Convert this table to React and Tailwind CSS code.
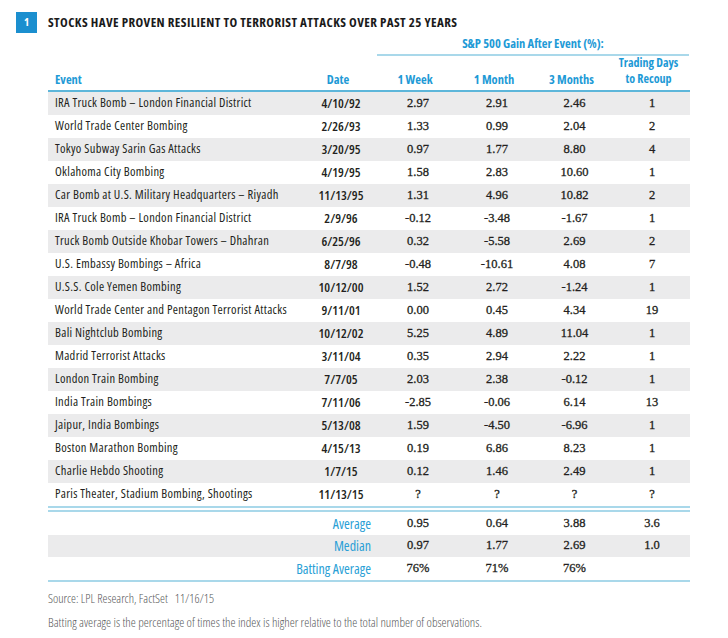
import React from "react";

const rows = [
  ["IRA Truck Bomb – London Financial District", "4/10/92", "2.97", "2.91", "2.46", "1"],
  ["World Trade Center Bombing", "2/26/93", "1.33", "0.99", "2.04", "2"],
  ["Tokyo Subway Sarin Gas Attacks", "3/20/95", "0.97", "1.77", "8.80", "4"],
  ["Oklahoma City Bombing", "4/19/95", "1.58", "2.83", "10.60", "1"],
  ["Car Bomb at U.S. Military Headquarters – Riyadh", "11/13/95", "1.31", "4.96", "10.82", "2"],
  ["IRA Truck Bomb – London Financial District", "2/9/96", "-0.12", "-3.48", "-1.67", "1"],
  ["Truck Bomb Outside Khobar Towers – Dhahran", "6/25/96", "0.32", "-5.58", "2.69", "2"],
  ["U.S. Embassy Bombings – Africa", "8/7/98", "-0.48", "-10.61", "4.08", "7"],
  ["U.S.S. Cole Yemen Bombing", "10/12/00", "1.52", "2.72", "-1.24", "1"],
  ["World Trade Center and Pentagon Terrorist Attacks", "9/11/01", "0.00", "0.45", "4.34", "19"],
  ["Bali Nightclub Bombing", "10/12/02", "5.25", "4.89", "11.04", "1"],
  ["Madrid Terrorist Attacks", "3/11/04", "0.35", "2.94", "2.22", "1"],
  ["London Train Bombing", "7/7/05", "2.03", "2.38", "-0.12", "1"],
  ["India Train Bombings", "7/11/06", "-2.85", "-0.06", "6.14", "13"],
  ["Jaipur, India Bombings", "5/13/08", "1.59", "-4.50", "-6.96", "1"],
  ["Boston Marathon Bombing", "4/15/13", "0.19", "6.86", "8.23", "1"],
  ["Charlie Hebdo Shooting", "1/7/15", "0.12", "1.46", "2.49", "1"],
  ["Paris Theater, Stadium Bombing, Shootings", "11/13/15", "?", "?", "?", "?"],
];

const summary = [
  ["Average", "0.95", "0.64", "3.88", "3.6"],
  ["Median", "0.97", "1.77", "2.69", "1.0"],
  ["Batting Average", "76%", "71%", "76%", ""],
];

const cond = "font-['Open_Sans',sans-serif] font-stretch-[75%]";
const serif = "font-['Liberation_Serif',serif] text-[12.5px] [-webkit-text-stroke:0.3px_#231f20]";

export default function App() {
  return (
    <div className={`w-[728px] h-[638px] bg-white ${cond} text-[#231f20]`}>
      <div className="pt-[12px] pl-[16px] flex items-center">
        <div className="w-[21px] h-[21px] bg-[#1b8fcf] text-white text-[11px] font-bold flex items-center justify-center">1</div>
        <div className="ml-[11px] text-[13px] font-bold tracking-[0.4px] text-[#1a1a1a] whitespace-nowrap">
          STOCKS HAVE PROVEN RESILIENT TO TERRORIST ATTACKS OVER PAST 25 YEARS
        </div>
      </div>

      <div className="ml-[48px] w-[642px]">
        <div className="flex h-[22px] mt-[1px]">
          <div className="w-[329px]" />
          <div className="w-[312px] flex items-center justify-center border-b-[2px] border-[#a9d8ea] text-[#1e9ad6] text-[12.5px] font-bold whitespace-nowrap">
            S&amp;P 500 Gain After Event (%):
          </div>
        </div>

        <div className="flex h-[36px] items-end pb-[3px] border-b-[2px] border-[#5db6da] text-[#1e9ad6] text-[12.5px] font-bold leading-[15px] whitespace-nowrap">
          <div className="w-[257px] pl-[7px]">Event</div>
          <div className="w-[72px] text-center pr-[6px]">Date</div>
          <div className="w-[82px] text-center pr-[6px]">1 Week</div>
          <div className="w-[76px] text-center pr-[6px]">1 Month</div>
          <div className="w-[79px] text-center pr-[6px]">3 Months</div>
          <div className="w-[76px] text-center pr-[7px] flex flex-col text-[12px] leading-[16px]">
            <div>Trading Days</div>
            <div>to Recoup</div>
          </div>
        </div>

        {rows.map((r, i) => (
          <div key={i} className={`flex h-[23px] items-center whitespace-nowrap ${i % 2 === 0 ? "bg-[#ebebec]" : "bg-white"}`}>
            <div className="w-[257px] pl-[7px] text-[12.5px] tracking-[0.3px]">{r[0]}</div>
            <div className="w-[72px] text-center text-[13px] font-semibold">{r[1]}</div>
            <div className={`w-[82px] text-center ${serif}`}>{r[2]}</div>
            <div className={`w-[76px] text-center ${serif}`}>{r[3]}</div>
            <div className={`w-[79px] text-center ${serif}`}>{r[4]}</div>
            <div className={`w-[76px] text-center ${serif}`}>{r[5]}</div>
          </div>
        ))}

        <div className="h-[2px] bg-[#a9d8ea]" />
        <div className="h-[2px] bg-white" />
        <div className="h-[2px] bg-[#a9d8ea]" />

        {summary.map((s, i) => (
          <div key={i} className={`flex h-[22.5px] items-center ${i === 1 ? "bg-[#ebebec]" : "bg-white"}`}>
            <div className="w-[329px] text-right pr-[6px] text-[14px] text-[#2a9fd6]">{s[0]}</div>
            <div className={`w-[82px] text-center ${serif}`}>{s[1]}</div>
            <div className={`w-[76px] text-center ${serif}`}>{s[2]}</div>
            <div className={`w-[79px] text-center ${serif}`}>{s[3]}</div>
            <div className={`w-[76px] text-center ${serif}`}>{s[4]}</div>
          </div>
        ))}
        <div className="h-[2px] bg-[#a9d8ea]" />

        <div className="mt-[8px] text-[12.5px] font-light text-[#58595b] whitespace-pre">Source: LPL Research, FactSet   11/16/15</div>
        <div className="mt-[5px] text-[12.75px] font-light text-[#58595b] whitespace-nowrap">
          Batting average is the percentage of times the index is higher relative to the total number of observations.
        </div>
      </div>
    </div>
  );
}
